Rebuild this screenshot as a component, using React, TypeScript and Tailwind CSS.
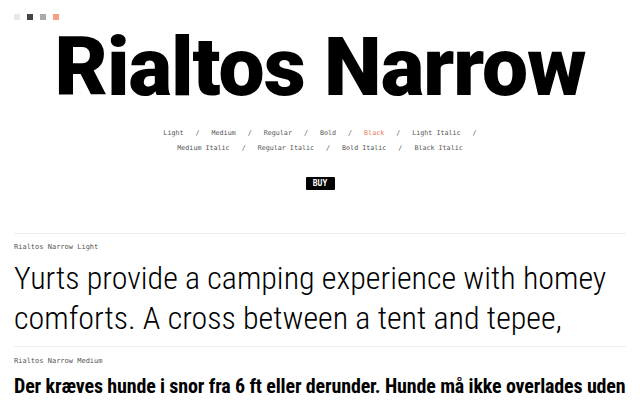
import React from "react";

const mono = { fontFamily: '"DejaVu Sans Mono", "Liberation Mono", monospace' };
const cond = { fontFamily: '"Roboto Condensed", Roboto, sans-serif' };

export default function App() {
  const row1 = ["Light", "Medium", "Regular", "Bold", "Black", "Light Italic"];
  const row2 = ["Medium Italic", "Regular Italic", "Bold Italic", "Black Italic"];
  const item = (t: string, i: number, arr: string[], trailing: boolean) => (
    <React.Fragment key={t}>
      <span className={t === "Black" ? "text-[#e8795a]" : "text-[#555]"}>{t}</span>
      {i < arr.length - 1 && <span className="text-[#555] px-[12px]">/</span>}
      {i === arr.length - 1 && trailing && <span className="text-[#555] pl-[12px]">/</span>}
    </React.Fragment>
  );
  return (
    <div className="w-[640px] h-[400px] overflow-hidden bg-white antialiased">
      <div className="flex gap-[7px] pt-[14px] pl-[14px]">
        <div className="w-[6px] h-[6px] bg-[#e8e8e8]" />
        <div className="w-[6px] h-[6px] bg-[#444]" />
        <div className="w-[6px] h-[6px] bg-[#aaa]" />
        <div className="w-[6px] h-[6px] bg-[#f4a283]" />
      </div>
      <h1
        className="text-center text-black font-black leading-none mt-[6px] tracking-[-1px]"
        style={{ fontFamily: 'Roboto, "Noto Sans", sans-serif', fontSize: 82 }}
      >
        Rialtos Narrow
      </h1>
      <div className="mt-[18px] flex flex-col items-center text-[6.7px] leading-[15px]" style={mono}>
        <div>{row1.map((t, i) => item(t, i, row1, true))}</div>
        <div>{row2.map((t, i) => item(t, i, row2, false))}</div>
      </div>
      <div className="flex justify-center mt-[21px]">
        <div className="bg-black text-white text-[8px] font-bold w-[29px] h-[13px] flex items-center justify-center rounded-[1px]" style={mono}>
          BUY
        </div>
      </div>
      <div className="mx-[14px] mt-[43px] border-t border-[#eeeeee]" />
      <div className="px-[14px]">
        <div className="text-[7px] leading-[10px] text-[#555] mt-[8px]" style={mono}>Rialtos Narrow Light</div>
        <p className="text-[32px] leading-[40px] font-light text-black mt-[6px]" style={cond}>
          Yurts provide a camping experience with homey comforts. A cross between a tent and tepee,
        </p>
      </div>
      <div className="mx-[14px] mt-[8px] border-t border-[#eeeeee]" />
      <div className="px-[14px]">
        <div className="text-[7px] leading-[10px] text-[#555] mt-[9px]" style={mono}>Rialtos Narrow Medium</div>
        <p className="text-[20px] leading-[30px] font-bold text-black whitespace-nowrap mt-[5px] tracking-[-0.15px]" style={cond}>
          Der kræves hunde i snor fra 6 ft eller derunder. Hunde må ikke overlades uden
        </p>
      </div>
    </div>
  );
}
